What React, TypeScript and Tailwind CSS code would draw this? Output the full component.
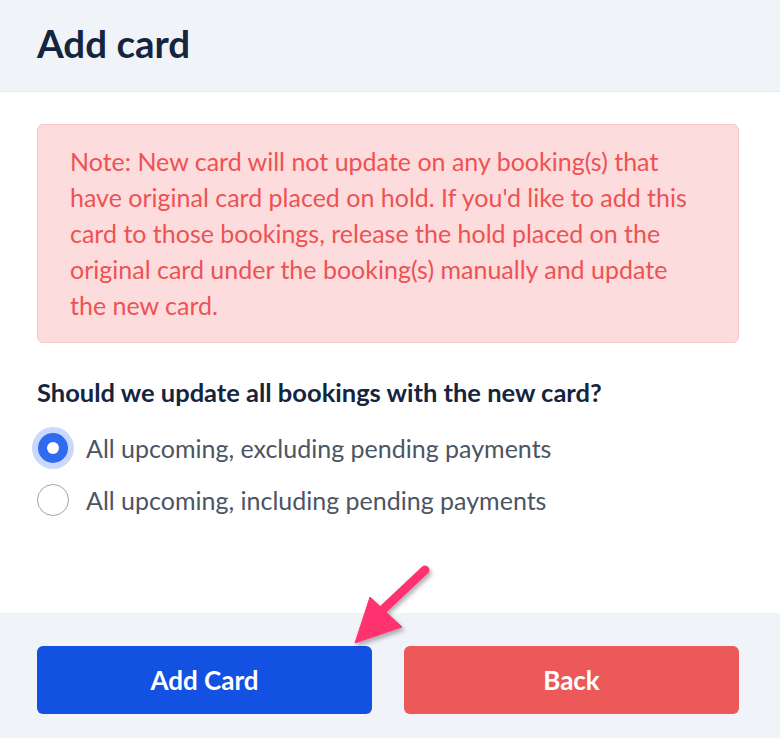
export default function App() {
  return (
    <div className="relative w-[780px] h-[738px] bg-white flex flex-col font-['Lato',sans-serif]">
      <div className="h-[92px] bg-[#f0f4f9] border-b border-[#e2e8f0] flex items-center pl-[37px] pb-[4px]">
        <h1 className="text-[38.5px] font-bold text-[#14253d] leading-none">Add card</h1>
      </div>
      <div className="flex-1 pl-[37px] pr-[41px] pt-[32px]">
        <div className="bg-[#fcdcdc] border border-[#f6c8c8] rounded-[6px] pl-[32px] pr-[38px] pt-[18px] pb-[19px]">
          <p className="text-[25px] leading-[36px] text-[#ee5253]">
            Note: New card will not update on any booking(s) that have original card placed on hold. If you'd like to add this card to those bookings, release the hold placed on the original card under the booking(s) manually and update the new card.
          </p>
        </div>
        <p className="mt-[34px] text-[25.5px] font-bold text-[#14253d] leading-[30px]">
          Should we update all bookings with the new card?
        </p>
        <div className="mt-[25px] flex flex-col gap-[20px]">
          <label className="flex items-center gap-[17px]">
            <span className="w-[32px] h-[32px] flex items-center justify-center">
              <span className="w-[30px] h-[30px] rounded-full bg-[#2f6bef] ring-[6px] ring-[#c9d8fc] flex items-center justify-center">
                <span className="w-[12px] h-[12px] rounded-full bg-white" />
              </span>
            </span>
            <span className="text-[25px] text-[#4b5563] leading-[32px]">All upcoming, excluding pending payments</span>
          </label>
          <label className="flex items-center gap-[17px]">
            <span className="w-[32px] h-[32px] rounded-full border border-[#a0a5ad] bg-white" />
            <span className="text-[25px] text-[#4b5563] leading-[32px]">All upcoming, including pending payments</span>
          </label>
        </div>
      </div>
      <div className="h-[125px] bg-[#f0f4f9] pl-[37px] pr-[41px] pt-[33px] flex gap-[32px]">
        <button className="flex-1 h-[68px] rounded-[6px] bg-[#1351e3] text-white text-[26px] font-bold">Add Card</button>
        <button className="flex-1 h-[68px] rounded-[6px] bg-[#eb5a58] text-white text-[26px] font-bold">Back</button>
      </div>
      <svg className="absolute left-[340px] top-[560px]" width="100" height="95" viewBox="0 0 100 95">
        <defs>
          <filter id="sh" x="-30%" y="-30%" width="160%" height="160%">
            <feDropShadow dx="2" dy="3" stdDeviation="2" floodColor="#000" floodOpacity="0.3" />
          </filter>
        </defs>
        <g filter="url(#sh)" fill="#ff3370" stroke="#ff3370">
          <line x1="85" y1="10" x2="35" y2="57" strokeWidth="9" strokeLinecap="round" />
          <polygon points="15,83 30,37 62,67" strokeWidth="1" strokeLinejoin="round" />
        </g>
      </svg>
    </div>
  );
}
